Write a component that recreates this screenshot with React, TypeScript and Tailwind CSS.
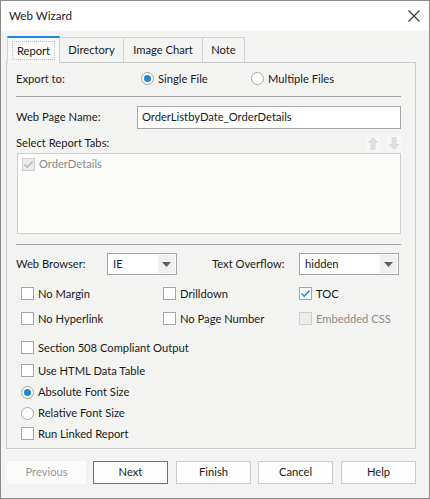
import React from 'react';

const font = { fontFamily: 'Lato, "Noto Sans", "Liberation Sans", sans-serif' };

function Checkbox({ checked, disabled }: { checked?: boolean; disabled?: boolean }) {
  return (
    <span
      className={`flex h-[13px] w-[13px] shrink-0 items-center justify-center border ${
        disabled ? 'border-[#cfcfcf] bg-[#ececec]' : 'border-[#a6a6a6] bg-white'
      }`}
    >
      {checked && (
        <svg width="11" height="11" viewBox="0 0 11 11">
          <path d="M1.5 5.5 L4.2 8.2 L9.5 2.5" fill="none" stroke={disabled ? '#b8b8b8' : '#1a8ad4'} strokeWidth="1.6" />
        </svg>
      )}
    </span>
  );
}

function Radio({ checked }: { checked?: boolean }) {
  return (
    <span className="flex h-[13px] w-[13px] shrink-0 items-center justify-center rounded-full border border-[#a6a6a6] bg-white">
      {checked && <span className="h-[7px] w-[7px] rounded-full bg-[#1a8ad4]" />}
    </span>
  );
}

function CheckRow({ label, checked, disabled }: { label: string; checked?: boolean; disabled?: boolean }) {
  return (
    <div className="flex items-center gap-[4px]">
      <Checkbox checked={checked} disabled={disabled} />
      <span className={disabled ? 'text-[#8c8c8c]' : ''}>{label}</span>
    </div>
  );
}

function Combo({ value, width }: { value: string; width: string }) {
  return (
    <div className={`flex h-[22px] items-center border border-[#a6a6a6] bg-white ${width}`}>
      <span className="flex-1 pl-[5px]">{value}</span>
      <span className="mr-[1px] flex h-[18px] w-[17px] items-center justify-center bg-[#f1f0f1]">
        <svg width="9" height="5" viewBox="0 0 9 5">
          <path d="M0 0 H9 L4.5 5 Z" fill="#5f5f5f" />
        </svg>
      </span>
    </div>
  );
}

function Arrow({ down }: { down?: boolean }) {
  return (
    <span className="flex h-[15px] w-[14px] items-center justify-center bg-[#f7f7f7]">
      <svg width="12" height="13" viewBox="0 0 12 13" className={down ? 'rotate-180' : ''}>
        <path d="M6 0 L12 6 H8.5 V13 H3.5 V6 H0 Z" fill="#dedede" />
      </svg>
    </span>
  );
}

function Button({ label, primary, disabled, width = 'w-[75px]', className = '' }: { label: string; primary?: boolean; disabled?: boolean; width?: string; className?: string }) {
  return (
    <div
      className={`flex h-[23px] items-center justify-center ${width} ${className} ${
        disabled
          ? 'bg-[#fbfbfb] text-[#9a9a9a]'
          : primary
          ? 'border border-[#1a8ad4] bg-[#fdfdfd]'
          : 'border border-[#cccccc] bg-[#fdfdfd]'
      }`}
    >
      {label}
    </div>
  );
}

export default function App() {
  const tabs = [
    { label: 'Directory', w: 'w-[64px]' },
    { label: 'Image Chart', w: 'w-[79px]' },
    { label: 'Note', w: 'w-[42px]' },
  ];
  return (
    <div style={font} className="flex h-[499px] w-[430px] flex-col border border-[#8a8a8a] bg-[#f3f4f2] text-[11.2px] text-[#1a1a1a]">
      <div className="flex h-[30px] shrink-0 items-center justify-between bg-white pl-[8px] pr-[9px]">
        <span className="text-[11.6px]">Web Wizard</span>
        <svg width="12" height="12" viewBox="0 0 12 12">
          <path d="M0.5 0.5 L11.5 11.5 M11.5 0.5 L0.5 11.5" stroke="#333" strokeWidth="1.1" />
        </svg>
      </div>

      <div className="flex flex-col pl-[5px] pr-[13px] pt-[5px]">
        <div className="flex h-[26px] items-end">
          <div className="relative z-10 -mb-px ml-px flex h-[27px] w-[53px] items-center justify-center border-x border-t-2 border-x-[#d2d2d2] border-t-[#1a8ad4] bg-[#f9f9f9]">
            <span className="border border-dotted border-[#bdbdbd] px-[4px] leading-[17px]">Report</span>
          </div>
          {tabs.map((t) => (
            <div key={t.label} className={`flex h-[25px] items-center justify-center border-r border-t border-[#d2d2d2] ${t.w}`}>
              {t.label}
            </div>
          ))}
        </div>

        <div className="flex h-[387px] flex-col border border-[#cacaca] pl-[9px] pr-[14px] pt-[5px]">
          <div className="flex h-[22px] items-center">
            <span className="w-[125px]">Export to:</span>
            <div className="flex w-[110px] items-center gap-[4px]">
              <Radio checked />
              <span>Single File</span>
            </div>
            <div className="flex items-center gap-[4px]">
              <Radio />
              <span>Multiple Files</span>
            </div>
          </div>

          <div className="mt-[6px] h-px bg-[#a0a0a0]" />

          <div className="mt-[9px] flex h-[23px] items-center">
            <span className="w-[121px]">Web Page Name:</span>
            <div className="flex h-[23px] flex-1 items-center border border-[#a6a6a6] bg-white pl-[4px]">
              OrderListbyDate_OrderDetails
            </div>
          </div>

          <div className="mt-[6px] flex h-[16px] items-center justify-between">
            <span>Select Report Tabs:</span>
            <div className="flex gap-[7px]">
              <Arrow />
              <Arrow down />
            </div>
          </div>

          <div className="mt-[2px] ml-px h-[81px] border border-[#cfcfcf] bg-[#fcfdfb] pl-[4px] pt-[2px]">
            <div className="flex items-center gap-[4px] text-[#8a8a8a]">
              <Checkbox checked disabled />
              <span>OrderDetails</span>
            </div>
          </div>

          <div className="mt-[10px] h-px bg-[#a0a0a0]" />

          <div className="mt-[8px] flex h-[22px] items-center">
            <span className="w-[91px]">Web Browser:</span>
            <Combo value="IE" width="w-[70px]" />
            <span className="ml-[35px] w-[87px]">Text Overflow:</span>
            <Combo value="hidden" width="w-[100px]" />
          </div>

          <div className="flex flex-col pl-[5px]">
            <div className="mt-[9px] flex h-[20px] items-center">
              <div className="w-[142px]"><CheckRow label="No Margin" /></div>
              <div className="w-[136px]"><CheckRow label="Drilldown" /></div>
              <CheckRow label="TOC" checked />
            </div>
            <div className="mt-[5px] flex h-[20px] items-center">
              <div className="w-[142px]"><CheckRow label="No Hyperlink" /></div>
              <div className="w-[136px]"><CheckRow label="No Page Number" /></div>
              <CheckRow label="Embedded CSS" disabled />
            </div>
            <div className="mt-[9px] flex h-[20px] items-center">
              <CheckRow label="Section 508 Compliant Output" />
            </div>
            <div className="mt-[3px] flex h-[20px] items-center">
              <CheckRow label="Use HTML Data Table" />
            </div>
            <div className="mt-px flex h-[20px] items-center gap-[4px]">
              <Radio checked />
              <span>Absolute Font Size</span>
            </div>
            <div className="mt-px flex h-[20px] items-center gap-[4px]">
              <Radio />
              <span>Relative Font Size</span>
            </div>
            <div className="mt-px flex h-[20px] items-center">
              <CheckRow label="Run Linked Report" />
            </div>
          </div>
        </div>

        <div className="mt-[12px] flex items-center">
          <Button label="Previous" disabled width="w-[79px]" className="ml-px" />
          <Button label="Next" primary className="ml-[7px]" />
          <Button label="Finish" className="ml-[8px]" />
          <Button label="Cancel" className="ml-[7px]" />
          <Button label="Help" className="ml-[8px]" />
        </div>
      </div>
    </div>
  );
}
